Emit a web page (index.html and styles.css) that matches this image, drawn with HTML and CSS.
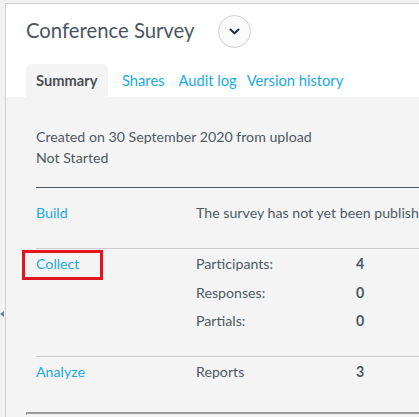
FILE: index.html
```html
<!DOCTYPE html>
<html>
<head>
<meta charset="utf-8">
<link rel="stylesheet" href="styles.css">
</head>
<body>
<div class="side"><span class="side-arrow"></span></div>
<div class="frame">
  <div class="header">
    <div class="title-row">
      <h1 class="title">Conference Survey</h1>
      <button class="menu-btn" type="button">
        <svg width="11" height="7" viewBox="0 0 11 7"><path d="M1.5 1.5 L5.5 5.3 L9.5 1.5" fill="none" stroke="#1d2b4a" stroke-width="2" stroke-linecap="round" stroke-linejoin="round"/></svg>
      </button>
    </div>
    <div class="tabs">
      <span class="tab active">Summary</span>
      <span class="tab link shares">Shares</span>
      <span class="tab link audit">Audit log</span>
      <span class="tab link version">Version history</span>
    </div>
  </div>
  <div class="content">
    <div class="meta">
      <div>Created on 30 September 2020 from upload</div>
      <div>Not Started</div>
    </div>
    <div class="table">
      <div class="row build">
        <div class="c1"><a class="link">Build</a></div>
        <div class="c2">The survey has not yet been published.</div>
      </div>
      <div class="row collect-row">
        <div class="c1"><a class="link">Collect</a><span class="highlight"></span></div>
        <div class="stats">
          <div class="stat"><span class="c2">Participants:</span><span class="c3">4</span></div>
          <div class="stat"><span class="c2">Responses:</span><span class="c3">0</span></div>
          <div class="stat"><span class="c2">Partials:</span><span class="c3">0</span></div>
        </div>
      </div>
      <div class="row analyze-row">
        <div class="c1"><a class="link">Analyze</a></div>
        <div class="stats">
          <div class="stat"><span class="c2">Reports</span><span class="c3">3</span></div>
        </div>
      </div>
    </div>
    <div class="footer-line"></div>
  </div>
</div>
</body>
</html>
```
FILE: styles.css
```css
* { box-sizing: border-box; }
html, body { margin: 0; padding: 0; }
body {
  background: #f2f2f2;
  font-family: Lato, "Open Sans", sans-serif;
  color: #4d5963;
  width: 419px;
  height: 417px;
  overflow: hidden;
  position: relative;
}
.side {
  position: absolute;
  left: 0; top: 0;
  width: 5px; height: 417px;
}
.side-arrow {
  position: absolute;
  left: 0; top: 311px;
  width: 0; height: 0;
  border-top: 3px solid transparent;
  border-bottom: 3px solid transparent;
  border-right: 4px solid #6f8290;
}
.frame {
  margin-left: 5px;
  margin-top: 3px;
  border-left: 1px solid #d2d2d2;
  border-top: 1px solid #cfcfd4;
  height: 414px;
  background: #f4f4f4;
  overflow: hidden;
  position: relative;
}
.header {
  background: #ffffff;
  height: 93px;
  padding-left: 20px;
  display: flex;
  flex-direction: column;
}
.title-row {
  display: flex;
  align-items: center;
  height: 52px;
}
.title {
  margin: 0;
  font-size: 20.3px;
  font-weight: 400;
  color: #4a5661;
  line-height: 1;
}
.menu-btn {
  margin-left: 24px;
  margin-top: 2px;
  width: 33px; height: 33px;
  border-radius: 50%;
  border: 1px solid #cfcfcf;
  background: #fafafa;
  padding: 0;
  display: flex;
  align-items: center;
  justify-content: center;
}
.tabs {
  display: flex;
  align-items: stretch;
  margin-top: 8px;
  height: 33px;
}
.tab {
  font-size: 14.7px;
  display: flex;
  align-items: center;
  white-space: nowrap;
  padding-bottom: 2px;
}
.tab.active {
  background: #f4f4f4;
  border-radius: 5px 5px 0 0;
  font-weight: 700;
  color: #4a4f55;
  padding: 0 10px 2px;
  width: 82px;
}
.tab.shares { margin-left: 14px; }
.tab.audit { margin-left: 14px; }
.tab.version { margin-left: 10px; }
.link { color: #21a9e1; text-decoration: none; }
.content {
  padding-left: 30px;
  padding-top: 29px;
  font-size: 14.2px;
}
.meta div { line-height: 21px; }
.meta { padding-bottom: 19px; border-bottom: 1px solid #4b5660; }
.row {
  display: flex;
  border-top: 1px solid #cccccc;
}
.row.build { border-top: none; height: 60px; padding-top: 16px; }
.row.collect-row { height: 108px; padding-top: 6px; }
.row.analyze-row { height: 55px; padding-top: 6px; }
.c1 { width: 160px; line-height: 18px; position: relative; }
.c2 { width: 160px; line-height: 18px; display: inline-block; white-space: nowrap; }
.stats { display: flex; flex-direction: column; gap: 10.5px; }
.stat { display: flex; }
.c3 { font-weight: 700; line-height: 18px; }
.highlight {
  position: absolute;
  left: -14px; top: -5px;
  width: 81px; height: 30px;
  border: 3px solid #e4141e;
}
.footer-line {
  position: absolute;
  left: 20px; top: 408px;
  width: 400px; height: 3px;
  border-top: 2px solid #999999;
  border-left: 1px solid #999999;
}
```
